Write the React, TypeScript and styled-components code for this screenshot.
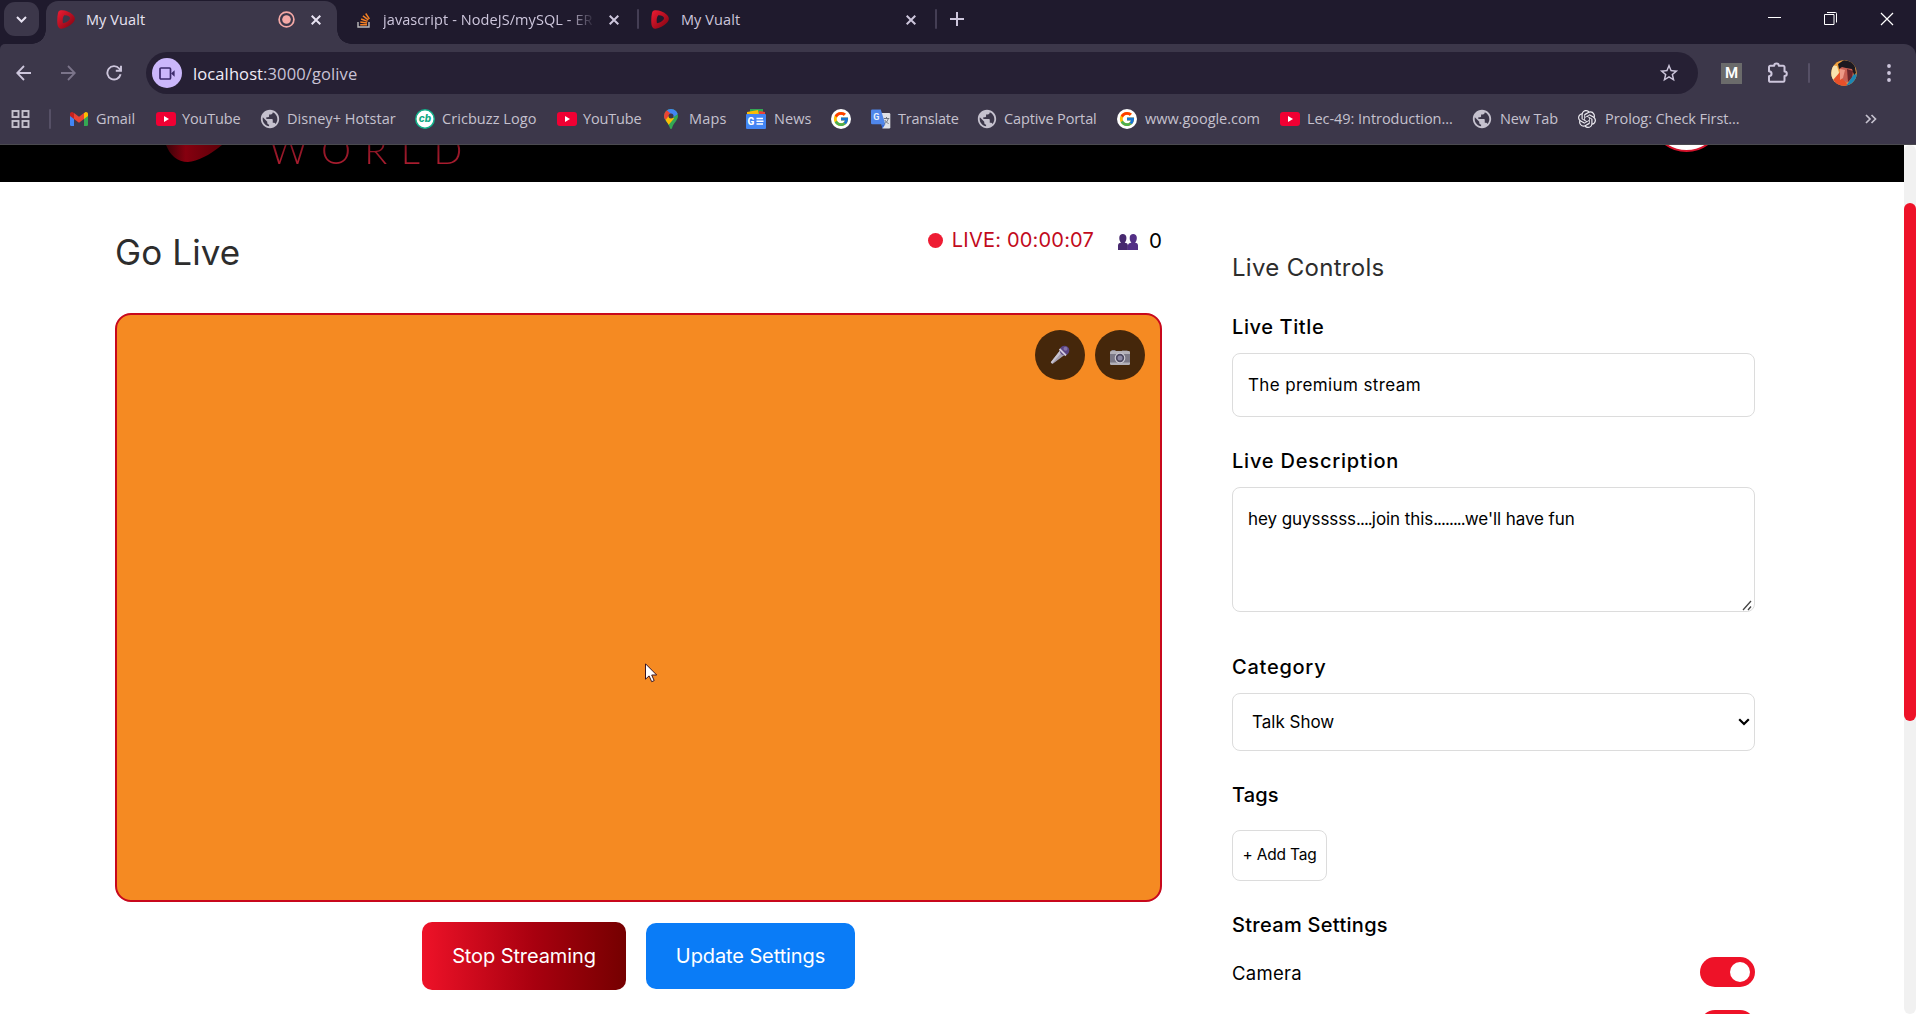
import React from "react";
import styled, { createGlobalStyle } from "styled-components";
import { FcGoogle } from "react-icons/fc";
import { MdPublic, MdStarBorder } from "react-icons/md";
import { SiOpenai } from "react-icons/si";

const ui = `"Open Sans", "Noto Sans", sans-serif`;
const body = `Inter, Roboto, sans-serif`;

const Global = createGlobalStyle`
  * { box-sizing: border-box; }
  body { margin: 0; background: #fff; overflow: hidden; }
  svg { display: block; flex: none; }
`;

const Win = styled.div`
  display: flex;
  flex-direction: column;
  width: 1916px;
  height: 1014px;
  overflow: hidden;
  font-family: ${body};
  color: #000;
`;

/* ---------- browser chrome ---------- */
const TabStrip = styled.div`
  display: flex;
  height: 44px;
  background: #1f1a2d;
  font-family: ${ui};
`;
const SearchTabs = styled.div`
  display: flex;
  align-items: center;
  justify-content: center;
  width: 35px;
  height: 34px;
  margin: 2px 7px 0 4px;
  border-radius: 11px;
  background: #3c374a;
`;
const Tab = styled.div<{ $active?: boolean; $w: number; $pl: number; $pr: number }>`
  position: relative;
  display: flex;
  align-items: center;
  width: ${(p) => p.$w}px;
  height: ${(p) => (p.$active ? 43 : 37)}px;
  margin-top: 1px;
  padding: 0 ${(p) => p.$pr}px ${(p) => (p.$active ? 6 : 0)}px ${(p) => p.$pl}px;
  border-radius: 12px 12px 0 0;
  background: ${(p) => (p.$active ? "#3c374a" : "transparent")};
  &::before,
  &::after {
    content: ${(p) => (p.$active ? '""' : "none")};
    position: absolute;
    bottom: 0;
    width: 14px;
    height: 14px;
  }
  &::before {
    left: -14px;
    background: radial-gradient(circle at 0 0, transparent 13.5px, #3c374a 14px);
  }
  &::after {
    right: -14px;
    background: radial-gradient(circle at 100% 0, transparent 13.5px, #3c374a 14px);
  }
`;
const TabTitle = styled.span<{ $ml: number; $mr?: number; $fade?: boolean; $on?: boolean }>`
  flex: 1;
  min-width: 0;
  margin: 0 ${(p) => p.$mr ?? 0}px 0 ${(p) => p.$ml}px;
  overflow: hidden;
  white-space: nowrap;
  font-size: 14.5px;
  line-height: 22px;
  letter-spacing: 0.08px;
  color: ${(p) => (p.$on ? "#e8e3f2" : "#cdc6dc")};
  ${(p) => p.$fade && "mask-image: linear-gradient(90deg, #000 88%, transparent 101%);"}
`;
const RecordingDot = styled.svg`
  margin-right: 16px;
`;
const TabSep = styled.i<{ $ml: number }>`
  width: 2px;
  height: 20px;
  margin: 9px 0 0 ${(p) => p.$ml}px;
  border-radius: 1px;
  background: #443e54;
`;
const NewTab = styled.div`
  display: flex;
  align-items: center;
  height: 38px;
  margin-left: 13px;
`;
const WinControls = styled.div`
  display: flex;
  align-items: flex-start;
  gap: 43px;
  margin-left: auto;
  padding: 12px 22px 0 0;
`;
const ToolbarBack = styled.div`
  background: #1f1a2d;
`;
const Toolbar = styled.div`
  display: flex;
  align-items: center;
  height: 58px;
  padding-left: 16px;
  border-radius: 5px 12px 0 0;
  background: #3c374a;
  font-family: ${ui};
`;
const NavIcons = styled.div`
  display: flex;
  align-items: center;
  gap: 30px;
  width: 130px;
`;
const Omnibox = styled.div`
  display: flex;
  align-items: center;
  width: 1552px;
  height: 42px;
  padding: 0 18px 0 6px;
  border-radius: 21px;
  background: #262034;
`;
const CamChip = styled.div`
  display: flex;
  align-items: center;
  justify-content: center;
  width: 30px;
  height: 30px;
  border-radius: 50%;
  background: #cbb7fb;
`;
const Url = styled.span`
  flex: 1;
  margin-left: 11px;
  padding-top: 2px;
  font-size: 16.5px;
  line-height: 24px;
  letter-spacing: 0.11px;
  color: #f1edf8;
  span {
    color: #c9c3d6;
  }
`;
const ExtM = styled.div`
  width: 21px;
  height: 21px;
  margin: 0 25px 0 23px;
  background: #6b6b6b;
  color: #fff;
  font: 600 15px/21px Roboto, sans-serif;
  text-align: center;
`;
const ToolSep = styled.i<{ $m: string }>`
  width: 2px;
  height: 20px;
  margin: ${(p) => p.$m};
  border-radius: 1px;
  background: #565066;
`;
const Kebab = styled.svg`
  margin-left: 30px;
`;
const Bookmarks = styled.div`
  display: flex;
  align-items: center;
  height: 43px;
  padding: 0 39px 8px 11px;
  border-bottom: 1px solid #4b4a50;
  background: #3c374a;
  font-family: ${ui};
`;
const Bookmark = styled.div<{ $w: number; $gap: number }>`
  display: flex;
  align-items: center;
  gap: ${(p) => p.$gap}px;
  width: ${(p) => p.$w}px;
  color: #c5c1ce;
`;
const BookmarkText = styled.span<{ $ls: number }>`
  font-size: 14.5px;
  line-height: 22px;
  letter-spacing: ${(p) => p.$ls}px;
  white-space: nowrap;
`;
const Globe = styled(MdPublic)`
  width: 22px;
  height: 22px;
  margin: 0 -2px;
`;
const Overflow = styled.svg`
  margin-left: auto;
`;

/* ---------- page ---------- */
const Page = styled.div`
  display: flex;
  flex: 1;
  min-height: 0;
`;
const Content = styled.div`
  display: flex;
  flex-direction: column;
  width: 1904px;
`;
const SiteHeader = styled.header`
  display: flex;
  height: 37px;
  padding-left: 163px;
  overflow: hidden;
  background: #000;
`;
const Wordmark = styled.div`
  height: 44px;
  margin: -18px 0 0 44px;
  font: 300 38px/44px Lato, sans-serif;
  letter-spacing: 13.4px;
  white-space: nowrap;
  color: transparent;
  background: linear-gradient(180deg, #000 0 10px, #8a1424 20px, #b01e31 40px);
  background-clip: text;
  -webkit-background-clip: text;
`;
const ProfileRing = styled.div`
  width: 73px;
  height: 73px;
  margin: -66px 181px 0 auto;
  border: 2px solid #d3122a;
  border-radius: 50%;
  background: #fff;
`;
const Main = styled.main`
  display: flex;
  flex: 1;
  min-height: 0;
  gap: 70px;
  padding-left: 115px;
`;
const LeftCol = styled.section`
  width: 1047px;
`;
const HeadRow = styled.div`
  display: flex;
  justify-content: space-between;
  align-items: flex-start;
  height: 131px;
  padding-top: 43px;
`;
const Title = styled.h1`
  margin: 5px 0 0;
  font-weight: 400;
  font-size: 35px;
  line-height: 44px;
  letter-spacing: 0.1px;
  color: #2d2d2d;
`;
const Status = styled.div`
  display: flex;
  align-items: center;
  height: 30px;
  font-size: 20px;
  line-height: 30px;
`;
const LiveDot = styled.i`
  width: 15px;
  height: 15px;
  margin-right: 9px;
  border-radius: 50%;
  background: #ee1c33;
`;
const LiveTime = styled.span`
  margin-right: 24px;
  letter-spacing: 0.2px;
  color: #c20a1c;
`;
const PeopleIcon = styled.svg`
  margin-top: 4px;
`;
const Viewers = styled.span`
  margin-left: 11px;
  padding-top: 1px;
  font-size: 20.5px;
`;
const Stage = styled.div`
  position: relative;
  height: 589px;
  border: 2px solid #c8081c;
  border-radius: 16px;
  background: #f58a22;
`;
const StageTools = styled.div`
  display: flex;
  justify-content: flex-end;
  gap: 10px;
  padding: 15px;
`;
const RoundTool = styled.button<{ $drop?: number }>`
  display: flex;
  align-items: center;
  justify-content: center;
  width: 50px;
  height: 50px;
  padding: ${(p) => p.$drop ?? 0}px 0 0;
  border: 0;
  border-radius: 50%;
  background: #45270b;
`;
const Pointer = styled.svg`
  position: absolute;
  left: 528px;
  top: 348px;
`;
const Actions = styled.div`
  display: flex;
  justify-content: center;
  align-items: center;
  gap: 20px;
  padding-top: 20px;
`;
const ActionButton = styled.button<{ $w: number; $h: number; $bg: string }>`
  width: ${(p) => p.$w}px;
  height: ${(p) => p.$h}px;
  padding: 0;
  border: 0;
  border-radius: 10px;
  background: ${(p) => p.$bg};
  color: #fff;
  font: 400 20px/26px ${body};
  letter-spacing: -0.1px;
`;
const RightCol = styled.section`
  width: 523px;
  padding-top: 71px;
`;
const PanelTitle = styled.h2`
  margin: 0 0 31px;
  font-weight: 400;
  font-size: 24px;
  line-height: 30px;
  letter-spacing: 0.3px;
  color: #2d2d2d;
`;
const Label = styled.label<{ $ls: number; $mb?: number }>`
  display: block;
  margin-bottom: ${(p) => p.$mb ?? 13}px;
  font-weight: 500;
  font-size: 20px;
  line-height: 26px;
  letter-spacing: ${(p) => p.$ls}px;
`;
const field = `
  width: 523px;
  border: 1px solid #dcdcdc;
  border-radius: 8px;
  background: #fff;
  color: #000;
  outline: none;
`;
const Input = styled.input`
  ${field}
  display: block;
  height: 64px;
  margin-bottom: 31px;
  padding: 0 15px;
  font: 400 17px/24px ${body};
  letter-spacing: 0.38px;
`;
const TextArea = styled.div`
  ${field}
  display: flex;
  justify-content: space-between;
  height: 125px;
  margin-bottom: 42px;
  padding: 19px 1px 0 15px;
  font-size: 17px;
  line-height: 24px;
  letter-spacing: -0.07px;
`;
const Dots = styled.span`
  letter-spacing: -0.95px;
`;
const Grip = styled.svg`
  align-self: flex-end;
`;
const SelectBox = styled.div`
  ${field}
  display: flex;
  align-items: center;
  justify-content: space-between;
  height: 58px;
  margin-bottom: 31px;
  padding: 0 4px 0 19px;
  font-size: 17px;
  line-height: 24px;
`;
const AddTag = styled.button`
  display: block;
  width: 95px;
  height: 51px;
  margin-bottom: 31px;
  padding: 0 0 1px;
  border: 1px solid #dcdcdc;
  border-radius: 8px;
  background: #fff;
  color: #000;
  font: 400 15.5px/20px ${body};
  letter-spacing: -0.2px;
`;
const SettingRow = styled.div`
  display: flex;
  justify-content: space-between;
  align-items: center;
  height: 30px;
  margin: 0 0 23px;
`;
const SettingName = styled.span`
  padding-top: 2px;
  font-size: 18.5px;
  letter-spacing: 0.3px;
`;
const Toggle = styled.div`
  display: flex;
  justify-content: flex-end;
  width: 55px;
  height: 30px;
  padding: 5px;
  border-radius: 15px;
  background: #ee1228;
  &::after {
    content: "";
    width: 20px;
    height: 20px;
    border-radius: 50%;
    background: #fff;
  }
`;
const ScrollTrack = styled.div`
  width: 12px;
  padding-top: 58px;
  border-radius: 6px;
  background: #f1f1f1;
`;
const ScrollThumb = styled.div`
  height: 518px;
  border-radius: 6px;
  background: #ee1228;
`;

/* ---------- icons ---------- */
const Cross = ({ s = 10, c = "#e8e3f2", w = 2 }) => (
  <svg width={s} height={s} viewBox="0 0 10 10">
    <path d="M.7.7l8.600 8.600M9.300.7L.7 9.300" stroke={c} strokeWidth={(w * 10) / s} />
  </svg>
);
const Brand = ({ id }: { id: string }) => (
  <svg width="18" height="19" viewBox="0 0 18 19">
    <defs>
      <linearGradient id={id} x1="0" y1="0" x2="1" y2="1">
        <stop offset="0" stopColor="#ee1c33" />
        <stop offset="1" stopColor="#7d0310" />
      </linearGradient>
    </defs>
    <path
      fillRule="evenodd"
      fill={`url(#${id})`}
      d="M4 .3C8 0 12.500 1.800 15.800 4.700c2.800 2.500 2.600 5.800.2 8C12.700 16 8.500 18 4.700 18.700 2.300 19 .9 17.400.5 14.800 0 11 .2 6.500 1 3 1.400 1.300 2.400.4 4 .3zM7.300 5.300C5.700 7 5.300 10.500 6 13.200c2.600-.4 5.300-1.800 6.600-3.700.8-1.300.3-2.500-.9-3.200-1.300-.8-2.900-1.200-4.400-1z"
    />
  </svg>
);
const StackOverflow = () => (
  <svg width="14" height="16" viewBox="0 0 14 16">
    <path d="M1 10v5h11v-5" fill="none" stroke="#bcbbbb" strokeWidth="1.400" />
    <path d="M3.200 12.800h6.800M3.300 10l6.700.9M4.100 7l6.400 2.400M5.900 3.900l5.400 4M8.700 1.500l3.700 5.400" stroke="#f48024" strokeWidth="1.500" />
  </svg>
);
const PuzzleIcon = () => (
  <svg width="22" height="22" viewBox="0 0 22 22">
    <path
      d="M3.300 3.800H7.200a2.300 2.300 0 014.600 0h4.400a1.300 1.300 0 011.300 1.300v4.300a2.300 2.300 0 010 4.600v4.500a1.300 1.300 0 01-1.300 1.300H3.300A1.300 1.300 0 012 18.500v-4.300c3.400-.4 3.400-4.600 0-5V5.100a1.300 1.300 0 011.300-1.300z"
      fill="none"
      stroke="#cdc6dc"
      strokeWidth="2"
      strokeLinejoin="round"
    />
  </svg>
);
const YouTube = () => (
  <svg width="20" height="14" viewBox="0 0 20 14">
    <rect width="20" height="14" rx="3" fill="#f00033" />
    <path d="M8 4l5 3-5 3z" fill="#fff" />
  </svg>
);
const Gmail = () => (
  <svg width="18" height="14" viewBox="0 0 18 14">
    <path d="M0 3v9.800A1.200 1.200 0 001.200 14H4V5z" fill="#4285f4" />
    <path d="M18 3v9.800a1.200 1.200 0 01-1.200 1.200H14V5z" fill="#34a853" />
    <path d="M14 1v6l4-3V2c0-1.700-1.900-2.400-3-1.600z" fill="#fbbc04" />
    <path d="M4 7V1l5 3.800L14 1v6l-5 3.800z" fill="#ea4335" />
    <path d="M0 2v2l4 3V1L3 .4C1.900-.4 0 .3 0 2z" fill="#c5221f" />
  </svg>
);
const Cricbuzz = () => (
  <svg width="20" height="20" viewBox="0 0 20 20">
    <circle cx="10" cy="10" r="9.200" fill="#fff" stroke="#12b08a" strokeWidth="1.500" />
    <text x="10" y="13.300" textAnchor="middle" fontFamily="Inter, sans-serif" fontSize="10" fontWeight="800" fontStyle="italic" fill="#12a985">cb</text>
  </svg>
);
const MapsPin = () => (
  <svg width="14" height="20" viewBox="0 0 14 20">
    <clipPath id="pin"><path d="M7 0a7 7 0 017 7c0 4.500-4.500 6.500-6 12.200-.3 1-1.700 1-2 0C4.500 13.500 0 11.500 0 7a7 7 0 017-7z" /></clipPath>
    <g clipPath="url(#pin)">
      <rect width="14" height="20" fill="#34a853" />
      <path d="M3-1h11v6L8 9 3 5z" fill="#4285f4" />
      <path d="M0 2l2-1.500L7 5 2 11-1 9z" fill="#ea4335" />
      <path d="M1.500 11L6 5.500l4 4L4.500 16z" fill="#fbbc04" />
    </g>
    <circle cx="7" cy="7" r="2.500" fill="#3c374a" />
  </svg>
);
const News = () => (
  <svg width="20" height="20" viewBox="0 0 20 20">
    <path d="M4 0h13v6H4z" fill="#34a853" />
    <path d="M13 2l6 1v5h-6z" fill="#ea4335" />
    <path d="M1 3l11-2 1 5H1z" fill="#fbbc04" />
    <rect y="5" width="20" height="15" rx="1" fill="#4285f4" />
    <text x="1.600" y="16" fontFamily="Roboto, sans-serif" fontSize="10" fontWeight="800" fill="#fff">G</text>
    <path d="M10.500 9.500h6.500M10.500 12.300h7M10.500 15h6.500" stroke="#fff" strokeWidth="1.500" />
  </svg>
);
const GoogleDisc = () => (
  <svg width="20" height="20" viewBox="0 0 20 20">
    <circle cx="10" cy="10" r="10" fill="#fff" />
    <FcGoogle x="1.500" y="1.500" size={17} />
  </svg>
);
const Translate = () => (
  <svg width="20" height="20" viewBox="0 0 20 20">
    <path d="M8 4h10a1.300 1.300 0 011.300 1.300v13A1.300 1.300 0 0118 19.600h-6.500z" fill="#dfe1e6" />
    <path d="M1.300.5h8.500l4.500 14.800h-13A1.300 1.300 0 010 14V1.800A1.300 1.300 0 011.300.5z" fill="#4f86ea" />
    <path d="M11.500 19.600l-1.300-4.300h4.100z" fill="#3367d6" />
    <text x="2.200" y="10.500" fontFamily="Roboto, sans-serif" fontSize="9" fontWeight="700" fill="#e8f0fe">G</text>
    <path d="M12.800 9.500h5.500M15.500 8v1.500M17.300 9.500c-.6 2.500-2 4-4 5.300M13.800 11c.8 1.600 2 2.700 3.800 3.500" stroke="#6d7480" fill="none" />
  </svg>
);
const People = () => (
  <PeopleIcon width="20" height="16" viewBox="0 0 20 16">
    <path d="M0 16v-4.500C0 9.700 1 9 3 8.700 1.600 7.500 1.200 5.500 1.300 3.600 1.400 1.300 2.700 0 4.800 0s3.500 1.300 3.600 3.600c.1 1.900-.3 3.900-1.700 5.100C8.900 9 9.900 9.700 9.900 11.500V16z" fill="#47296f" />
    <path d="M9.900 16v-4.500c0-1.800 1.500-2.500 3.500-2.800-1.400-1.200-1.800-3.200-1.700-5.100C11.800 1.300 13.100 0 15.200 0s3.500 1.300 3.600 3.600c.1 1.900-.3 3.900-1.700 5.100 1.900.3 2.900 1 2.900 2.800V16z" fill="#532f86" />
  </PeopleIcon>
);
const Mic = () => (
  <svg width="20" height="20" viewBox="0 0 20 20">
    <path d="M10 5.500l4.500 4.500L2.500 19 .8 17.300z" fill="#a59fb0" />
    <path d="M10 5.500l1.800 1.800L2 18.500.8 17.300z" fill="#c9c4d0" />
    <circle cx="14.500" cy="5.500" r="4.800" fill="#5a4482" />
    <path d="M9.500 4l6.500 6.500" stroke="#cfc8dc" strokeWidth="1.800" />
    <circle cx="15.500" cy="3.800" r="2" fill="#8472a8" />
  </svg>
);
const Camera = () => (
  <svg width="20" height="15" viewBox="0 0 20 15">
    <path d="M1.500 0h4v2h-4zM12 .5h5.500V2H12z" fill="#8a8791" />
    <rect y="1" width="20" height="14" rx="1.200" fill="#b3b0b8" />
    <rect y="4" width="20" height="8.500" fill="#7b7886" />
    <circle cx="10" cy="8" r="5.300" fill="#d0cdd6" />
    <circle cx="10" cy="8" r="4.200" fill="#4c4860" />
    <circle cx="10" cy="8" r="2.500" fill="#8c88a3" />
  </svg>
);
const Avatar = () => (
  <svg width="26" height="26" viewBox="0 0 26 26">
    <clipPath id="av"><circle cx="13" cy="13" r="12.700" /></clipPath>
    <g clipPath="url(#av)">
      <rect width="26" height="26" fill="#f2a13c" />
      <path d="M0 5l6 1 2 7-4 9H0z" fill="#f8e2ae" />
      <path d="M2 20l7-8 8 14H6z" fill="#e8502a" />
      <path d="M8 7l9-1 6 3-1 8-6 6-6-5z" fill="#c85f52" />
      <path d="M9 9l5 1-2 8-3 2z" fill="#ee9a86" />
      <path d="M16 9l6 2-1 7-4 4z" fill="#6a262b" />
      <path d="M15 26l8-12 5 1v11z" fill="#1b86b4" />
      <path d="M7 4l6-4 10 2 2 11-2 2-2-6-6-1-4-1-3 2z" fill="#1c1920" />
    </g>
  </svg>
);

type Mark = { icon: React.ReactNode; text?: string; w: number; gap: number; ls?: number };
const marks: Mark[] = [
  { icon: <Gmail />, text: "Gmail", w: 86, gap: 8, ls: -0.07 },
  { icon: <YouTube />, text: "YouTube", w: 105, gap: 6, ls: -0.15 },
  { icon: <Globe />, text: "Disney+ Hotstar", w: 154, gap: 8, ls: 0.04 },
  { icon: <Cricbuzz />, text: "Cricbuzz Logo", w: 142, gap: 7, ls: 0.06 },
  { icon: <YouTube />, text: "YouTube", w: 107, gap: 6, ls: -0.15 },
  { icon: <MapsPin />, text: "Maps", w: 82, gap: 11, ls: 0.15 },
  { icon: <News />, text: "News", w: 85, gap: 8, ls: 0.1 },
  { icon: <GoogleDisc />, w: 40, gap: 0 },
  { icon: <Translate />, text: "Translate", w: 107, gap: 7, ls: -0.25 },
  { icon: <Globe />, text: "Captive Portal", w: 139, gap: 8, ls: -0.12 },
  { icon: <GoogleDisc />, text: "www.google.com", w: 163, gap: 8, ls: -0.03 },
  { icon: <YouTube />, text: "Lec-49: Introduction...", w: 193, gap: 7, ls: -0.05 },
  { icon: <Globe />, text: "New Tab", w: 105, gap: 9, ls: -0.14 },
  { icon: <SiOpenai size={18} color="#eceaf0" />, text: "Prolog: Check First...", w: 280, gap: 9, ls: -0.08 },
];

export default function App() {
  return (
    <Win>
      <Global />
      <TabStrip>
        <SearchTabs>
          <svg width="11" height="7" viewBox="0 0 11 7"><path d="M1 1l4.500 4.500L10 1" fill="none" stroke="#e8e3f2" strokeWidth="2" /></svg>
        </SearchTabs>
        <Tab $active $w={291} $pl={11} $pr={16}>
          <Brand id="b1" />
          <TabTitle $ml={11} $on>My Vualt</TabTitle>
          <RecordingDot width="17" height="17" viewBox="0 0 17 17">
            <circle cx="8.500" cy="8.500" r="7.400" fill="none" stroke="#f4a9a6" strokeWidth="1.700" />
            <circle cx="8.500" cy="8.500" r="4.300" fill="#f4a9a6" />
          </RecordingDot>
          <Cross />
        </Tab>
        <Tab $w={300} $pl={20} $pr={18}>
          <StackOverflow />
          <TabTitle $ml={12} $mr={16} $fade>javascript - NodeJS/mySQL - ER</TabTitle>
          <Cross c="#cdc6dc" />
        </Tab>
        <TabSep $ml={0} />
        <Tab $w={294} $pl={12} $pr={17}>
          <Brand id="b2" />
          <TabTitle $ml={12}>My Vualt</TabTitle>
          <Cross c="#cdc6dc" />
        </Tab>
        <TabSep $ml={2} />
        <NewTab>
          <svg width="14" height="14" viewBox="0 0 14 14"><path d="M7 0v14M0 7h14" stroke="#cdc6dc" strokeWidth="2" /></svg>
        </NewTab>
        <WinControls>
          <svg width="13" height="13"><path d="M0 5.500h13" stroke="#fff" /></svg>
          <svg width="13" height="13"><path d="M.5 2.500h9.500v10H.5zM3 .5h8.500a1 1 0 011 1v9" fill="none" stroke="#fff" /></svg>
          <Cross s={14} c="#fff" w={1.2} />
        </WinControls>
      </TabStrip>
      <ToolbarBack>
        <Toolbar>
          <NavIcons>
            <svg width="15" height="16" viewBox="0 0 15 16"><path d="M15 8H1.500M8 1L1.200 8 8 15" fill="none" stroke="#cdc6dc" strokeWidth="1.800" /></svg>
            <svg width="15" height="16" viewBox="0 0 15 16"><path d="M0 8h13.500M7 1l6.800 7L7 15" fill="none" stroke="#7b748a" strokeWidth="1.800" /></svg>
            <svg width="16" height="16" viewBox="0 0 16 16"><path d="M14.600 9.300A6.700 6.700 0 1113.200 3.500L14.500 5M15 .8v5H9.800" fill="none" stroke="#cdc6dc" strokeWidth="1.900" /></svg>
          </NavIcons>
          <Omnibox>
            <CamChip>
              <svg width="16" height="13" viewBox="0 0 16 13"><rect x="1" y="1" width="10.500" height="11" rx="1" fill="none" stroke="#3b2a6b" strokeWidth="1.700" /><path d="M12 6.500l3.600-3.300v6.600z" fill="#3b2a6b" /></svg>
            </CamChip>
            <Url>localhost<span>:3000/golive</span></Url>
            <MdStarBorder size={22} color="#cdc6dc" />
          </Omnibox>
          <ExtM>M</ExtM>
          <PuzzleIcon />
          <ToolSep $m="0 21px 0 19px" />
          <Avatar />
          <Kebab width="4" height="18" viewBox="0 0 4 18">
            {[2, 9, 16].map((y) => <circle key={y} cx="2" cy={y} r="1.900" fill="#cdc6dc" />)}
          </Kebab>
        </Toolbar>
      </ToolbarBack>
      <Bookmarks>
        <svg width="19" height="18" viewBox="0 0 19 18">
          {[[1.5, 1], [11.5, 1], [1.5, 11], [11.5, 11]].map(([x, y]) => <rect key={`${x}-${y}`} x={x} y={y} width="6" height="6" fill="none" stroke="#c5c1ce" strokeWidth="1.900" />)}
        </svg>
        <ToolSep $m="0 19px" />
        {marks.map((m, i) => (
          <Bookmark key={i} $w={m.w} $gap={m.gap}>
            {m.icon}
            {m.text && <BookmarkText $ls={m.ls ?? 0}>{m.text}</BookmarkText>}
          </Bookmark>
        ))}
        <Overflow width="12" height="10" viewBox="0 0 12 10"><path d="M1 1l4 4-4 4M6.500 1l4 4-4 4" fill="none" stroke="#c5c1ce" strokeWidth="1.700" /></Overflow>
      </Bookmarks>

      <Page>
        <Content>
          <SiteHeader>
            <svg width="62" height="20" viewBox="0 0 62 20">
              <defs><linearGradient id="lg" x1="0" y1="0" x2="1" y2="0"><stop offset="0" stopColor="#3a0208" /><stop offset=".35" stopColor="#86000f" /><stop offset="1" stopColor="#5c0009" /></linearGradient></defs>
              <path d="M3 0C7 10 14 17 25 17c9-.5 22-7 34-17z" fill="url(#lg)" />
            </svg>
            <Wordmark>WORLD</Wordmark>
            <ProfileRing />
          </SiteHeader>
          <Main>
            <LeftCol>
              <HeadRow>
                <Title>Go Live</Title>
                <Status>
                  <LiveDot />
                  <LiveTime>LIVE: 00:00:07</LiveTime>
                  <People />
                  <Viewers>0</Viewers>
                </Status>
              </HeadRow>
              <Stage>
                <StageTools>
                  <RoundTool><Mic /></RoundTool>
                  <RoundTool $drop={4}><Camera /></RoundTool>
                </StageTools>
                <Pointer width="13" height="20" viewBox="0 0 13 20">
                  <path d="M.5.8v15.400l3.600-3.300 2.600 5.800 2.500-1.100-2.500-5.600h5z" fill="#fff" stroke="#3a1420" />
                </Pointer>
              </Stage>
              <Actions>
                <ActionButton $w={204} $h={68} $bg="linear-gradient(90deg, #ee1228, #a8000f 55%, #750000)">Stop Streaming</ActionButton>
                <ActionButton $w={209} $h={66} $bg="#0a7cf7">Update Settings</ActionButton>
              </Actions>
            </LeftCol>
            <RightCol>
              <PanelTitle>Live Controls</PanelTitle>
              <Label $ls={0.6}>Live Title</Label>
              <Input defaultValue="The premium stream" />
              <Label $ls={0.8}>Live Description</Label>
              <TextArea>
                <span>hey guysssss<Dots>....</Dots>join this<Dots>........</Dots>we'll have fun</span>
                <Grip width="12" height="12" viewBox="0 0 12 12"><path d="M2 11L10 2M7 11l3-3.500" stroke="#444" strokeWidth="1.300" /></Grip>
              </TextArea>
              <Label $ls={0.75}>Category</Label>
              <SelectBox>
                <span>Talk Show</span>
                <svg width="12" height="8" viewBox="0 0 12 8"><path d="M1.200 1.200L6 6l4.800-4.800" fill="none" stroke="#000" strokeWidth="2.200" /></svg>
              </SelectBox>
              <Label $ls={0.15} $mb={22}>Tags</Label>
              <AddTag>+ Add Tag</AddTag>
              <Label $ls={0.3} $mb={19}>Stream Settings</Label>
              <SettingRow><SettingName>Camera</SettingName><Toggle /></SettingRow>
              <SettingRow><SettingName /><Toggle /></SettingRow>
            </RightCol>
          </Main>
        </Content>
        <ScrollTrack><ScrollThumb /></ScrollTrack>
      </Page>
    </Win>
  );
}
